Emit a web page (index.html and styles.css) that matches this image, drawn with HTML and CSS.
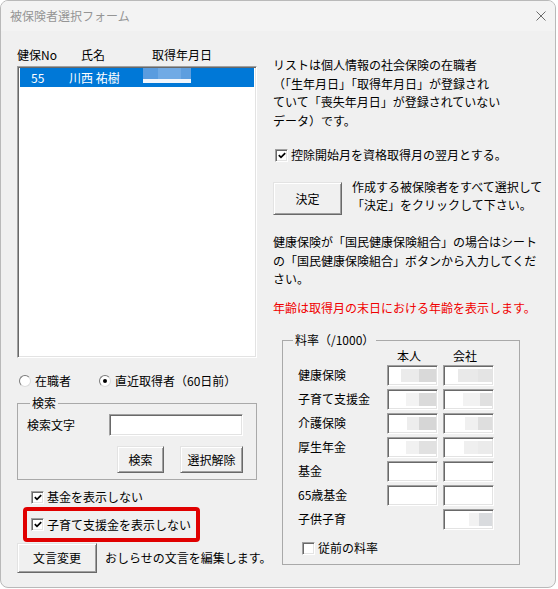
FILE: index.html
```html
<!DOCTYPE html>
<html lang="ja">
<head>
  <meta charset="UTF-8" />
  <title>被保険者選択フォーム</title>
  <link rel="stylesheet" href="styles.css">
</head>
<body>
  <div class="window">
    <div class="titlebar">
      <span class="title">被保険者選択フォーム</span>
      <svg class="close" width="10" height="10" viewBox="0 0 10 10">
        <path d="M0.5 0.5 L9.5 9.5 M9.5 0.5 L0.5 9.5" stroke="#6b6b6b" stroke-width="1" fill="none"/>
      </svg>
    </div>

    <div class="client">
      <!-- left: list, filters, search -->
      <div class="col-left">
        <div class="list-head">
          <span class="h-no">健保No</span>
          <span class="h-name">氏名</span>
          <span class="h-date">取得年月日</span>
        </div>
        <div class="listbox">
          <div class="list-row selected">
            <span class="c-no">55</span>
            <span class="c-name">川西 祐樹</span>
            <span class="c-date"></span>
          </div>
        </div>

        <div class="radios">
          <label class="radio"><span class="rb"></span>在職者</label>
          <label class="radio"><span class="rb on"></span>直近取得者（60日前）</label>
        </div>

        <fieldset class="group search">
          <legend>検索</legend>
          <div class="search-row">
            <span>検索文字</span>
            <span class="field search-field"></span>
          </div>
          <div class="search-buttons">
            <button class="btn btn-find">検索</button>
            <button class="btn btn-clear">選択解除</button>
          </div>
        </fieldset>

        <label class="check opt-fund"><span class="cb"><svg width="8" height="7" viewBox="0 0 8 7"><path d="M0.8 3.2 L3 5.4 L7.2 1.2" stroke="#000" stroke-width="1.7" fill="none"/></svg></span>基金を表示しない</label>
        <div class="highlight">
          <label class="check"><span class="cb"><svg width="8" height="7" viewBox="0 0 8 7"><path d="M0.8 3.2 L3 5.4 L7.2 1.2" stroke="#000" stroke-width="1.7" fill="none"/></svg></span>子育て支援金を表示しない</label>
        </div>

        <div class="notice-row">
          <button class="btn btn-notice">文言変更</button>
          <span>おしらせの文言を編集します。</span>
        </div>
      </div>

      <!-- right: notes and rates -->
      <div class="col-right">
        <p class="note">リストは個人情報の社会保険の在職者<br>（「生年月日」「取得年月日」が登録され<br>ていて「喪失年月日」が登録されていない<br>データ）です。</p>

        <label class="check opt-month"><span class="cb"><svg width="8" height="7" viewBox="0 0 8 7"><path d="M0.8 3.2 L3 5.4 L7.2 1.2" stroke="#000" stroke-width="1.7" fill="none"/></svg></span>控除開始月を資格取得月の翌月とする。</label>

        <div class="decide-row">
          <button class="btn btn-decide">決定</button>
          <p class="decide-text">作成する被保険者をすべて選択して<br>「決定」をクリックして下さい。</p>
        </div>

        <p class="note note-kokuho">健康保険が「国民健康保険組合」の場合はシート<br>の「国民健康保険組合」ボタンから入力してくだ<br>さい。</p>

        <p class="note warn">年齢は取得月の末日における年齢を表示します。</p>

        <fieldset class="group rates">
          <legend>料率（/1000）</legend>
          <div class="rate-grid">
            <span></span><span class="rate-head">本人</span><span class="rate-head">会社</span>

            <span>健康保険</span>
            <span class="field"><i class="mask m1"></i></span>
            <span class="field"><i class="mask m2"></i></span>

            <span>子育て支援金</span>
            <span class="field"><i class="mask m3"></i></span>
            <span class="field"><i class="mask m4"></i></span>

            <span>介護保険</span>
            <span class="field"><i class="mask m5"></i></span>
            <span class="field"><i class="mask m6"></i></span>

            <span>厚生年金</span>
            <span class="field"><i class="mask m7"></i></span>
            <span class="field"><i class="mask m8"></i></span>

            <span>基金</span>
            <span class="field"></span>
            <span class="field"></span>

            <span>65歳基金</span>
            <span class="field"></span>
            <span class="field"></span>

            <span>子供子育</span>
            <span></span>
            <span class="field"><i class="mask m9"></i></span>
          </div>
          <label class="check opt-old"><span class="cb"></span>従前の料率</label>
        </fieldset>
      </div>
    </div>
  </div>
</body>
</html>
```

FILE: styles.css
```css
* {
  box-sizing: border-box;
}

body {
  margin: 0;
  background: #fff;
  font-family: "Noto Sans CJK JP", "Noto Sans", sans-serif;
  font-size: 12px;
  color: #000;
}

.window {
  width: 556px;
  height: 588px;
  border: 1px solid #b9b9b9;
  border-radius: 8px;
  background: #f0f0f0;
  overflow: hidden;
  display: flex;
  flex-direction: column;
}

.titlebar {
  flex: none;
  height: 30px;
  background: #f3f3f3;
  display: flex;
  align-items: center;
  justify-content: space-between;
  padding: 0 9px;
}

.title {
  color: #959595;
  line-height: 16px;
}

.client {
  display: flex;
  gap: 16px;
  padding-left: 16px;
}

/* shared controls */

.btn {
  flex: none;
  font: inherit;
  color: #000;
  background: #f0f0f0;
  border: 1px solid;
  border-color: #e3e3e3 #696969 #696969 #e3e3e3;
  box-shadow: inset 1px 1px #fff, inset -1px -1px #a0a0a0;
  padding: 0;
  line-height: 16px;
}

.field {
  display: flex;
  justify-content: flex-end;
  align-items: center;
  background: #fff;
  border: 1px solid;
  border-color: #a0a0a0 #fff #fff #a0a0a0;
  box-shadow: inset 1px 1px #696969, inset -1px -1px #e3e3e3;
  padding-right: 1px;
}

.check {
  display: flex;
  align-items: center;
  gap: 3px;
  line-height: 16px;
  white-space: nowrap;
}

.cb {
  flex: none;
  width: 13px;
  height: 13px;
  display: flex;
  align-items: center;
  justify-content: center;
  background: #fff;
  border: 1px solid;
  border-color: #a0a0a0 #fff #fff #a0a0a0;
  box-shadow: inset 1px 1px #696969, inset -1px -1px #e3e3e3;
}

.group {
  margin: 0;
  border: 1px solid #a9a9a9;
  min-width: 0;
}

.group legend {
  padding: 0 2px;
  line-height: 16px;
}

/* left column */

.col-left {
  width: 240px;
  flex: none;
  padding-top: 16px;
}

.list-head {
  display: flex;
  line-height: 16px;
  height: 16px;
}

.h-no { width: 64px; }
.h-name { width: 71px; }

.listbox {
  margin-top: 3px;
  height: 292px;
  background: #fff;
  border: 1px solid;
  border-color: #a0a0a0 #fff #fff #a0a0a0;
  box-shadow: inset 1px 1px #696969, inset -1px -1px #e3e3e3;
  padding: 1px 2px 2px 2px;
}

.list-row {
  display: flex;
  align-items: center;
  height: 19px;
  padding-left: 11px;
  line-height: 16px;
}

.list-row.selected {
  background: #0078d7;
  color: #fff;
}

.c-no { width: 38px; }
.c-name { width: 74px; }

.c-date {
  align-self: flex-start;
  width: 48px;
  height: 15px;
  background:
    linear-gradient(to bottom, transparent 0 11px, #f1f6fc 11px),
    linear-gradient(to right, #5a9cdf 0 15px, #70aae5 15px 38px, #5d9edf 38px);
}

.radios {
  display: flex;
  margin-top: 15px;
  padding-left: 2px;
  gap: 28px;
  line-height: 16px;
}

.radio {
  display: flex;
  align-items: center;
  gap: 4px;
}

.rb {
  width: 12px;
  height: 12px;
  border-radius: 50%;
  background: #fff;
  border: 1px solid;
  border-color: #7a7a7a #dcdcdc #dcdcdc #7a7a7a;
  display: flex;
  align-items: center;
  justify-content: center;
}

.rb.on::after {
  content: "";
  width: 4px;
  height: 4px;
  border-radius: 50%;
  background: #000;
}

.search {
  margin-top: 6px;
  padding: 0 13px 6px 9px;
}

.search legend {
  margin-left: 3px;
}

.search-row {
  display: flex;
  align-items: center;
  justify-content: space-between;
  margin-top: 3px;
  line-height: 16px;
}

.search-field {
  width: 134px;
  height: 22px;
}

.search-buttons {
  display: flex;
  justify-content: flex-end;
  gap: 16px;
  margin-top: 10px;
}

.btn-find { width: 47px; height: 27px; }
.btn-clear { width: 63px; height: 27px; }

.opt-fund {
  margin-top: 9px;
  margin-left: 14px;
}

.highlight {
  margin-top: 2px;
  margin-left: 6px;
  width: 177px;
  height: 35px;
  border: 4px solid #e00000;
  border-radius: 4px;
  display: flex;
  align-items: center;
  padding-left: 4px;
}

.notice-row {
  display: flex;
  align-items: center;
  gap: 8px;
  margin-top: 1px;
  line-height: 16px;
  white-space: nowrap;
}

.btn-notice { width: 80px; height: 30px; }

/* right column */

.col-right {
  flex: 1;
  padding-top: 25px;
}

.note {
  margin: 0;
  line-height: 18.5px;
  white-space: nowrap;
}

.opt-month {
  margin-top: 17px;
  margin-left: 2px;
}

.decide-row {
  display: flex;
  align-items: flex-start;
  margin-top: 19px;
}

.btn-decide { width: 69px; height: 33px; }

.decide-text {
  margin: -4px 0 0 10px;
  line-height: 17.5px;
  white-space: nowrap;
}

.note-kokuho { margin-top: 18px; }

.warn {
  margin-top: 10px;
  color: #f00000;
}

.rates {
  margin-top: 15px;
  margin-left: 9px;
  width: 238px;
  padding: 0 0 8px 10px;
}

.rate-grid {
  display: grid;
  grid-template-columns: 84px 51px 51px;
  grid-template-rows: 15px repeat(7, 24px);
  column-gap: 5px;
  align-items: center;
  margin-left: 5px;
  line-height: 16px;
  white-space: nowrap;
}

.rate-head {
  text-align: center;
  padding-right: 7px;
  line-height: 15px;
}

.rate-grid .field {
  height: 21px;
}

.opt-old {
  margin-top: 9px;
  margin-left: 9px;
}

/* blurred figures in the rate boxes */
.mask {
  display: block;
  height: 13px;
  width: var(--w);
  background: linear-gradient(to right, var(--a) 0 calc(100% - var(--s)), var(--b) 0);
}

.m1 { --w: 35px; --a: #ebebeb; --b: #d9d9d9; --s: 17px; }
.m2 { --w: 34px; --a: #e9e9e9; --b: #e4e4e4; --s: 14px; }
.m3 { --w: 30px; --a: #f3f3f3; --b: #dadada; --s: 17px; }
.m4 { --w: 29px; --a: #f2f2f2; --b: #e0e0e0; --s: 12px; }
.m5 { --w: 29px; --a: #ededed; --b: #d6d6d6; --s: 17px; }
.m6 { --w: 27px; --a: #f0f0f0; --b: #dedede; --s: 14px; }
.m7 { --w: 30px; --a: #f1f1f1; --b: #e1e1e1; --s: 17px; }
.m8 { --w: 28px; --a: #efefef; --b: #ebebeb; --s: 14px; }
.m9 { --w: 23px; --a: #f2f2f2; --b: #d9dbde; --s: 13px; }
```
